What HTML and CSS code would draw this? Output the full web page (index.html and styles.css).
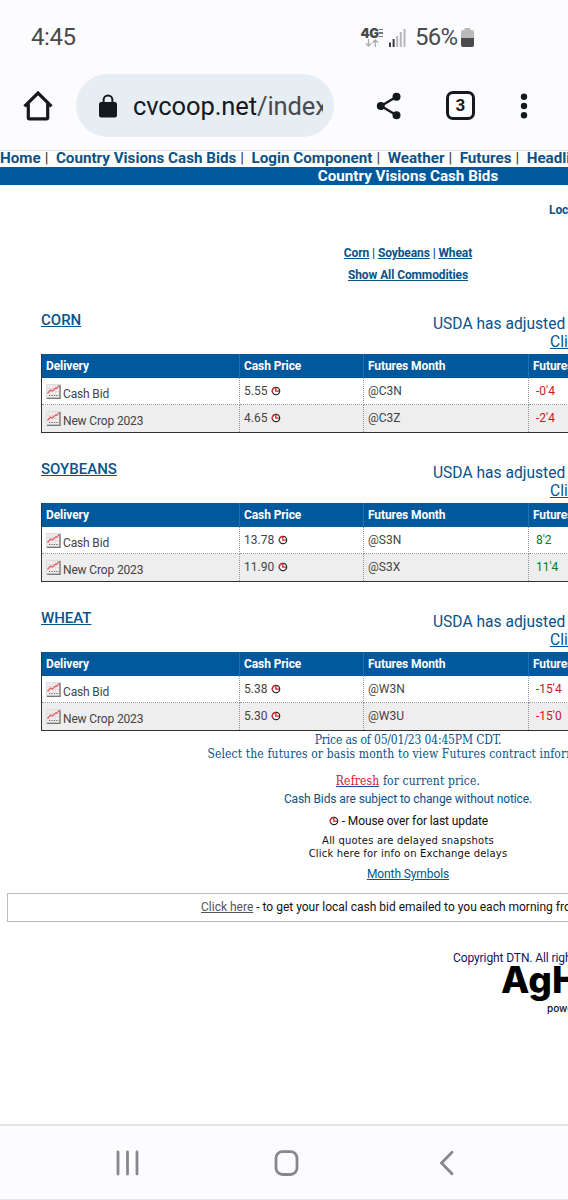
FILE: index.html
```html
<!DOCTYPE html>
<html lang="en">
<head>
  <meta charset="UTF-8">
  <title>Country Visions Cash Bids</title>
  <link rel="stylesheet" href="styles.css">
</head>
<body>

  <!-- Shared icons -->
  <svg class="sprite">
    <symbol id="chart" viewBox="0 0 15 15">
      <rect x="0" y="0" width="15" height="15" fill="#ddd"/>
      <rect x="1" y="1" width="12" height="12" fill="#f4eeee"/>
      <path d="M3.5 1v12M6.5 1v12M9.5 1v12M1 4.5h12M1 7.5h12" stroke="#ddd2d2" stroke-width=".6"/>
      <path d="M14 1v13.5H1" fill="none" stroke="#777" stroke-width="1.3"/>
      <path d="M3 11.5h10" stroke="#666" stroke-width="1.1" stroke-dasharray="1.2 1.2"/>
      <path d="M1.5 9.5l3-3.5 2 1 3-3 1 .5 2.5-3" fill="none" stroke="#e0606a" stroke-width="1.2"/>
    </symbol>
    <symbol id="clock" viewBox="0 0 10 10">
      <circle cx="5" cy="5" r="3.7" fill="#fff" stroke="#222" stroke-width="1.2"/>
      <path d="M1.7 6.8A3.7 3.7 0 0 1 5 1.3" fill="none" stroke="#c33" stroke-width="1.3"/>
      <path d="M4.8 1.5v3.6h3.6" fill="none" stroke="#d3222a" stroke-width="1.3"/>
    </symbol>
  </svg>

  <!-- Phone status bar -->
  <div class="status">
    <span class="time">4:45</span>
    <span class="network">
      <b>4G<i><span></span><span></span><span></span></i></b>
      <svg width="14" height="8" viewBox="0 0 14 8"><path d="M3.5 0v7M.8 4.3l2.7 2.8 2.7-2.8M10.3 8V1M7.6 3.7L10.3 1 13 3.7" fill="none" stroke="#aaa" stroke-width="1.3"/></svg>
    </span>
    <svg class="signal" width="17" height="19" viewBox="0 0 17 19">
      <path d="M1 14.5V19M4.6 11v8" stroke="#3c3d40" stroke-width="2"/>
      <path d="M8.2 8v11M11.8 4v15M15.5 1v18" stroke="#b7b7b9" stroke-width="2"/>
    </svg>
    <span class="percent">56%</span>
    <svg class="battery" width="13" height="19" viewBox="0 0 13 19">
      <path d="M3.5 0h6v2H11q2 0 2 2v6H0V4q0-2 2-2h1.500z" fill="#bababb"/>
      <path d="M0 10h13v7q0 2-2 2H2q-2 0-2-2z" fill="#4b4b4d"/>
    </svg>
  </div>

  <!-- Browser toolbar -->
  <div class="toolbar">
    <svg class="home" width="30" height="30" viewBox="0 0 30 30"><path d="M1.500 15.300L15 2l13.500 13.300M5.300 12.500V27q0 .8.8.8h17.800q.8 0 .8-.8V12.500" fill="none" stroke="#17191c" stroke-width="3.200"/></svg>
    <div class="address">
      <svg width="18" height="24" viewBox="0 0 18 24"><rect x="0" y="8" width="18" height="15.500" rx="2.200" fill="#15191d"/><path d="M4.600 9V5.800a4.400 4.400 0 0 1 8.800 0V9" fill="none" stroke="#15191d" stroke-width="2"/></svg>
      <span class="url">cvcoop.net<em>/index</em></span>
    </div>
    <svg class="share" width="26" height="28" viewBox="0 0 26 28"><path d="M20.500 4.800L5 14l15.500 9.200" fill="none" stroke="#15191d" stroke-width="2.400"/><circle cx="20.500" cy="4.800" r="4" fill="#15191d"/><circle cx="4.800" cy="14" r="4" fill="#15191d"/><circle cx="20.500" cy="23.200" r="4" fill="#15191d"/></svg>
    <span class="tabs">3</span>
    <svg class="dots" width="8" height="26" viewBox="0 0 8 26"><circle cx="4" cy="3.700" r="3.200" fill="#15191d"/><circle cx="4" cy="13" r="3.200" fill="#15191d"/><circle cx="4" cy="22.300" r="3.200" fill="#15191d"/></svg>
  </div>

  <!-- Web page, wider than the phone screen -->
  <div class="viewport">
    <div class="page">
      <div class="menu"><a>Home</a><span>|</span><a>Country Visions Cash Bids</a><span>|</span><a>Login Component</a><span>|</span><a>Weather</a><span>|</span><a>Futures</a><span>|</span><a>Headlines</a></div>
      <h1>Country Visions Cash Bids</h1>
      <div class="location">Location</div>
      <div class="commodities">
        <p><a>Corn</a> | <a>Soybeans</a> | <a>Wheat</a></p>
        <p><a>Show All Commodities</a></p>
      </div>

      <div class="section">
        <div class="section-head">
          <h2>CORN</h2>
          <div class="notice">USDA has adjusted <a>Click</a></div>
        </div>
        <table>
          <tr><th class="delivery">Delivery</th><th class="price">Cash Price</th><th class="month">Futures Month</th><th>Futures Change</th></tr>
          <tr><td class="name"><svg class="chart"><use href="#chart"/></svg>Cash Bid</td><td>5.55 <svg class="clock"><use href="#clock"/></svg></td><td>@C3N</td><td class="down">-0'4</td></tr>
          <tr><td class="name"><svg class="chart"><use href="#chart"/></svg>New Crop 2023</td><td>4.65 <svg class="clock"><use href="#clock"/></svg></td><td>@C3Z</td><td class="down">-2'4</td></tr>
        </table>
      </div>

      <div class="section">
        <div class="section-head">
          <h2>SOYBEANS</h2>
          <div class="notice">USDA has adjusted <a>Click</a></div>
        </div>
        <table>
          <tr><th class="delivery">Delivery</th><th class="price">Cash Price</th><th class="month">Futures Month</th><th>Futures Change</th></tr>
          <tr><td class="name"><svg class="chart"><use href="#chart"/></svg>Cash Bid</td><td>13.78 <svg class="clock"><use href="#clock"/></svg></td><td>@S3N</td><td class="up">8'2</td></tr>
          <tr><td class="name"><svg class="chart"><use href="#chart"/></svg>New Crop 2023</td><td>11.90 <svg class="clock"><use href="#clock"/></svg></td><td>@S3X</td><td class="up">11'4</td></tr>
        </table>
      </div>

      <div class="section">
        <div class="section-head">
          <h2>WHEAT</h2>
          <div class="notice">USDA has adjusted <a>Click</a></div>
        </div>
        <table>
          <tr><th class="delivery">Delivery</th><th class="price">Cash Price</th><th class="month">Futures Month</th><th>Futures Change</th></tr>
          <tr><td class="name"><svg class="chart"><use href="#chart"/></svg>Cash Bid</td><td>5.38 <svg class="clock"><use href="#clock"/></svg></td><td>@W3N</td><td class="down">-15'4</td></tr>
          <tr><td class="name"><svg class="chart"><use href="#chart"/></svg>New Crop 2023</td><td>5.30 <svg class="clock"><use href="#clock"/></svg></td><td>@W3U</td><td class="down">-15'0</td></tr>
        </table>
      </div>

      <div class="notes">
        <p class="serif as-of">Price as of 05/01/23 04:45PM CDT.</p>
        <p class="serif select">Select the futures or basis month to view Futures contract information.</p>
        <p class="serif refresh"><a>Refresh</a> for current price.</p>
        <p class="subject">Cash Bids are subject to change without notice.</p>
        <p class="mouse"><svg class="clock"><use href="#clock"/></svg> - Mouse over for last update</p>
        <p class="delayed">All quotes are delayed snapshots</p>
        <p class="delayed exchange">Click here for info on Exchange delays</p>
        <p class="symbols"><a>Month Symbols</a></p>
      </div>

      <div class="email"><a>Click here</a> - to get your local cash bid emailed to you each morning from us</div>

      <div class="copyright">Copyright DTN. All rights reserved.</div>
      <div class="logo">AgHost</div>
      <div class="powered">powered by DTN</div>
    </div>
  </div>

  <!-- Phone navigation -->
  <div class="navbar">
    <svg width="24" height="26" viewBox="0 0 24 26"><path d="M2 2v22M11.500 2v22M21 2v22" stroke="#88888b" stroke-width="2.800" stroke-linecap="round"/></svg>
    <svg width="26" height="26" viewBox="0 0 26 26"><rect x="2" y="1.700" width="21" height="22.800" rx="6.500" fill="none" stroke="#88888b" stroke-width="2.800"/></svg>
    <svg width="16" height="26" viewBox="0 0 16 26"><path d="M13 2.300L2.500 13 13 23.700" fill="none" stroke="#88888b" stroke-width="2.800" stroke-linecap="round"/></svg>
  </div>

</body>
</html>
```

FILE: styles.css
```css
body {
  margin: 0;
  width: 568px;
  height: 1200px;
  display: flex;
  flex-direction: column;
  overflow: hidden;
  background-color: #fff;
  font-family: Roboto, sans-serif;
}
p, h1, h2 {
  margin: 0;
}
a {
  text-decoration: underline;
}
.sprite {
  display: none;
}

/* Status bar */
.status {
  display: flex;
  align-items: center;
  box-sizing: border-box;
  height: 74px;
  padding-left: 31px;
  background-color: #fcfcff;
  color: #48494c;
  font-size: 24px;
  flex-shrink: 0;
}
.time {
  width: 329px;
  letter-spacing: -0.4px;
}
.network {
  display: flex;
  flex-direction: column;
  align-items: center;
  width: 24px;
  height: 19px;
  margin-right: 5px;
}
.network b {
  display: flex;
  align-items: center;
  font: 900 13px/11px Inter, sans-serif;
  letter-spacing: -0.5px;
}
.network i {
  display: flex;
  flex-direction: column;
  gap: 2px;
  margin-left: 1px;
}
.network i span {
  width: 4px;
  height: 1.5px;
  background-color: #777;
}
.percent {
  margin-left: 9px;
  letter-spacing: -0.7px;
}
.battery {
  margin-left: 4px;
}

/* Browser toolbar */
.toolbar {
  display: flex;
  align-items: center;
  box-sizing: border-box;
  height: 77px;
  padding: 0 0 13px 23px;
  border-bottom: 1px solid #dfe1e4;
  background-color: #fcfcff;
  flex-shrink: 0;
}
.address {
  display: flex;
  align-items: center;
  box-sizing: border-box;
  width: 258px;
  height: 63px;
  margin-left: 23px;
  padding-left: 23px;
  border-radius: 32px;
  background-color: #e6edf3;
}
.url {
  width: 190px;
  margin-left: 16px;
  overflow: hidden;
  white-space: nowrap;
  font-size: 25.5px;
  letter-spacing: -0.1px;
  color: #15191d;
}
.url em {
  font-style: normal;
  color: #454b51;
}
.share {
  margin-left: 42px;
}
.tabs {
  box-sizing: border-box;
  width: 29px;
  height: 29px;
  margin-left: 44px;
  border: 3px solid #15191d;
  border-radius: 7px;
  text-align: center;
  font-size: 17px;
  line-height: 23px;
  font-weight: bold;
  color: #15191d;
}
.dots {
  margin-left: 45px;
}

/* Page */
.viewport {
  height: 973px;
  overflow: hidden;
  flex-shrink: 0;
}
.page {
  width: 816px;
  color: #0a5288;
}
.menu {
  height: 16px;
  line-height: 15px;
  font-size: 15.2px;
  font-weight: bold;
  white-space: nowrap;
}
.menu a {
  text-decoration: none;
}
.menu span {
  margin: 0 7.5px 0 4px;
  font-weight: normal;
  color: #333;
}
h1 {
  height: 18px;
  line-height: 18px;
  background-color: #00599c;
  color: #fff;
  font-size: 15.2px;
  text-align: center;
}
.location {
  margin: 17px 0 24px 549px;
  font-size: 12px;
  line-height: 16px;
  letter-spacing: -0.1px;
  font-weight: bold;
}
.commodities {
  height: 42px;
  font-size: 12px;
  line-height: 22px;
  letter-spacing: -0.1px;
  font-weight: bold;
  text-align: center;
}
.section {
  padding: 0 40px 0 41px;
}
.section-head {
  display: flex;
  height: 70px;
}
h2 {
  width: 392px;
  padding-top: 26px;
  font-size: 15px;
  line-height: 20px;
  font-weight: 500;
  text-decoration: underline;
}
.notice {
  padding-top: 31px;
  font-size: 15.6px;
  line-height: 18px;
  white-space: nowrap;
}
.notice a {
  display: block;
  margin-left: 117px;
}
table {
  width: 735px;
  height: 79px;
  table-layout: fixed;
  border-collapse: separate;
  border-spacing: 0;
  border: solid #333;
  border-width: 0 1px 1px;
  color: #444;
  font-size: 12px;
  line-height: 14px;
}
th {
  box-sizing: border-box;
  height: 24px;
  padding: 0 4px;
  border-right: 1px solid #1c70b4;
  background-color: #00599c;
  color: #fff;
  font-size: 12px;
  letter-spacing: -0.1px;
  text-align: left;
}
.delivery {
  width: 198px;
}
.price {
  width: 124px;
}
.month {
  width: 165px;
}
td {
  box-sizing: border-box;
  height: 27px;
  padding: 6px 4px 0;
  border-right: 1px dotted #999;
  border-bottom: 1px dotted #999;
  vertical-align: top;
}
tr:last-child td {
  border-bottom: none;
  background-color: #eee;
}
td:last-child {
  padding-left: 7px;
}
td.name {
  line-height: 18px;
  letter-spacing: -0.15px;
}
.chart {
  width: 15px;
  height: 15px;
  margin-right: 2px;
  vertical-align: -1px;
}
.clock {
  width: 10px;
  height: 10px;
  margin-left: 1px;
  vertical-align: -1px;
}
td.down {
  color: #cc1720;
}
td.up {
  color: #0a7a1a;
}

/* Notes under the tables */
.notes {
  text-align: center;
  font-size: 12px;
  letter-spacing: -0.1px;
}
.serif {
  font-family: "DejaVu Serif Condensed", "DejaVu Serif", serif;
  font-stretch: condensed;
  font-size: 12px;
  letter-spacing: 0.13px;
  line-height: 14px;
}
.as-of {
  padding-top: 2px;
  letter-spacing: -0.15px;
}
.refresh {
  padding-top: 13px;
}
.refresh a {
  color: #d0202a;
  text-decoration-color: #0a5288;
}
.subject {
  margin-top: 4px;
  line-height: 14px;
}
.mouse {
  margin-top: 8px;
  line-height: 14px;
  color: #111;
}
.delayed {
  margin-top: 6px;
  font-family: "DejaVu Sans", sans-serif;
  font-size: 10px;
  letter-spacing: 0.18px;
  line-height: 13px;
  color: #111;
}
.exchange {
  margin-top: 0;
}
.symbols {
  margin-top: 7px;
  line-height: 14px;
}
.email {
  box-sizing: border-box;
  width: 802px;
  height: 29px;
  margin: 12px 0 0 7px;
  padding-left: 193px;
  border: 1px solid #bbb;
  color: #111;
  font-size: 12px;
  line-height: 27px;
  white-space: nowrap;
}
.email a {
  color: #555;
}
.copyright {
  margin: 29px 0 0 453px;
  font-size: 12px;
  line-height: 14px;
  letter-spacing: -0.1px;
  color: #15155f;
}
.logo {
  margin-left: 501px;
  font: 800 37px/30px Inter, sans-serif;
  color: #000;
}
.powered {
  margin: 7px 0 0 547px;
  font: 500 10px/12px Inter, sans-serif;
  color: #111;
}

/* Phone navigation */
.navbar {
  display: flex;
  align-items: center;
  box-sizing: border-box;
  height: 76px;
  padding: 0 0 0 116px;
  border-top: 2px solid #e3e5e8;
  border-bottom: 1px solid #e3e5e8;
  background-color: #fcfcff;
}
.navbar svg + svg {
  margin-left: 134px;
}
.navbar svg:last-child {
  margin-left: 139px;
}
```
